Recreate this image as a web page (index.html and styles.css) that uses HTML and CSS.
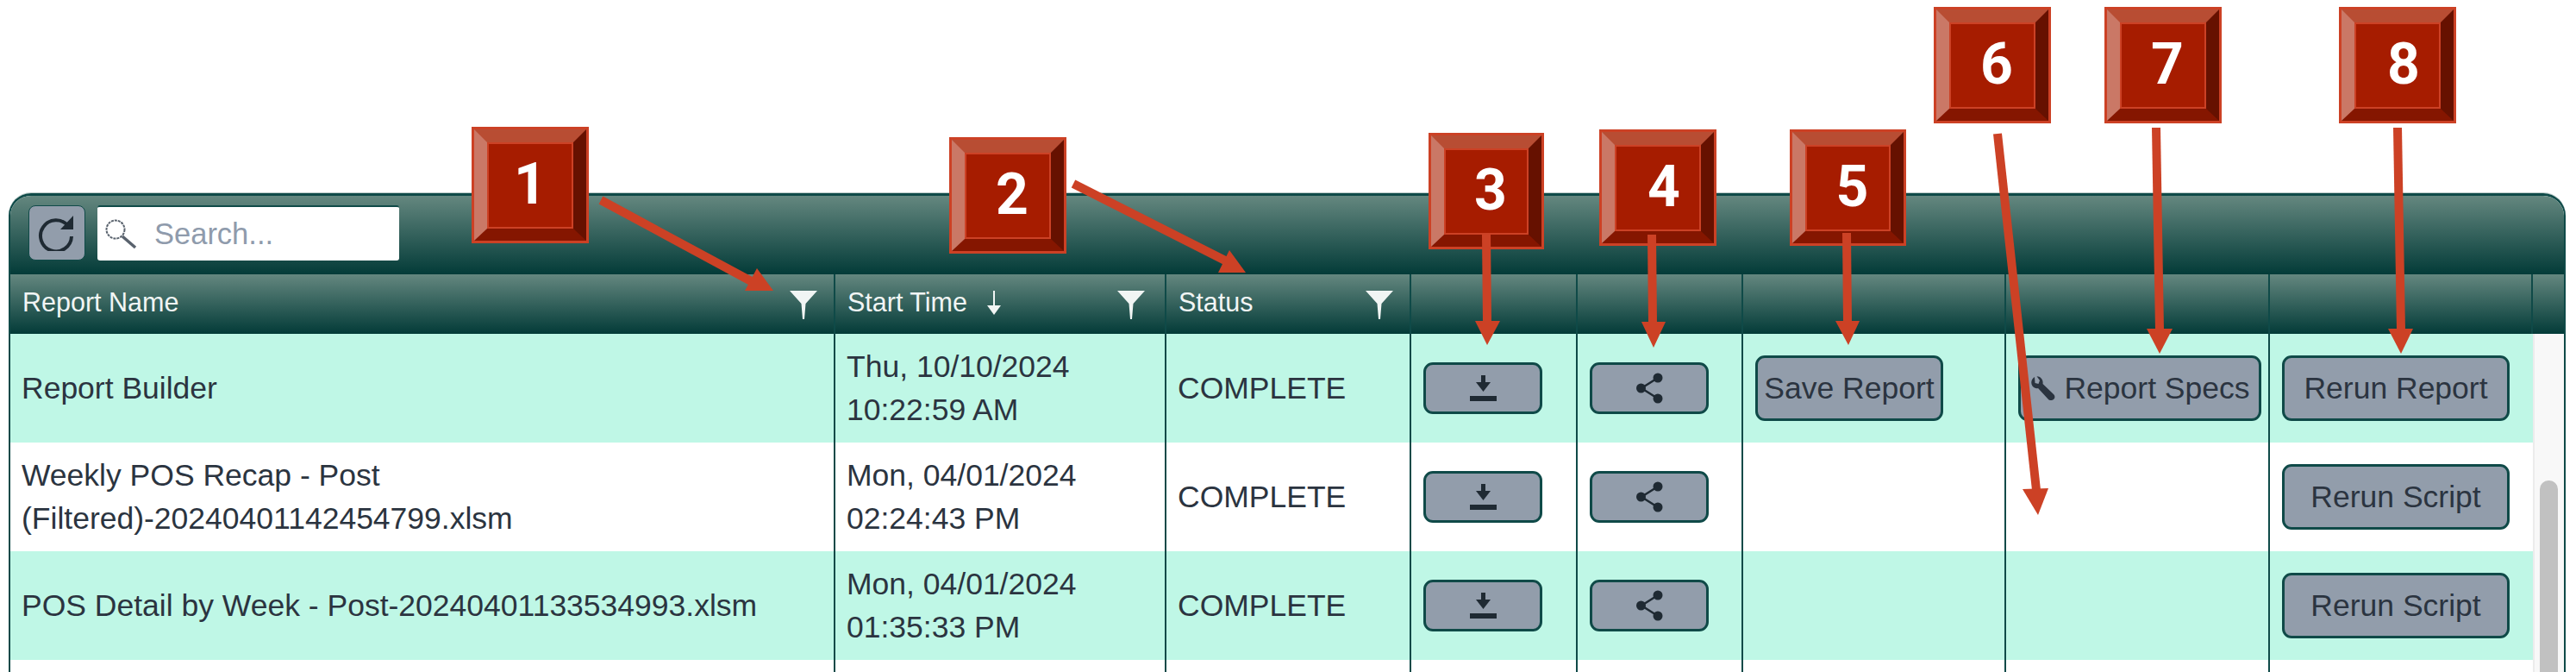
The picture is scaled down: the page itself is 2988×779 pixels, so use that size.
FILE: index.html
```html
<!DOCTYPE html>
<html lang="en">
<head>
    <meta charset="UTF-8">
    <meta name="viewport" content="width=device-width, initial-scale=1.0">
    <title>Report History</title>
    <link rel="stylesheet" href="styles.css">
</head>
<body>
    <svg class="icon-defs" width="0" height="0">
        <symbol id="icon-filter" viewBox="0 0 32 33">
            <polygon points="0,0 32,0 18.5,15 17,33 15,33 13.5,15"/>
        </symbol>
        <symbol id="icon-download" viewBox="0 0 31 30">
            <rect x="13" y="0" width="5" height="9"/>
            <polygon points="7,8 24,8 15.5,19"/>
            <rect x="0" y="24" width="31" height="6"/>
        </symbol>
        <symbol id="icon-share" viewBox="0 0 31 36">
            <path d="M25 6 L6 18 L25 30" fill="none" stroke="currentColor" stroke-width="2.5"/>
            <circle cx="25" cy="6" r="5.5"/>
            <circle cx="5.5" cy="18" r="5.5"/>
            <circle cx="25" cy="30" r="5.5"/>
        </symbol>
    </svg>

    <div class="page">
        <div class="panel">
            <div class="toolbar">
                <button class="refresh-btn" aria-label="Refresh">
                    <svg width="44" height="42" viewBox="0 0 44 42">
                        <path d="M35 13 A18 18 0 1 0 39 25" fill="none" stroke="currentColor" stroke-width="4"/>
                        <polygon points="41,1 41,17 26,17"/>
                    </svg>
                </button>
                <div class="search-box">
                    <svg width="38" height="36" viewBox="0 0 38 36">
                        <circle cx="12" cy="13" r="10.5" fill="none" stroke="#59626d" stroke-width="2" stroke-dasharray="3 1"/>
                        <path d="M20 21 L35 34" fill="none" stroke="#59626d" stroke-width="3.5"/>
                    </svg>
                    <input type="text" class="search-input" placeholder="Search...">
                </div>
            </div>

            <table class="grid grid-head">
                <colgroup>
                    <col class="col-name"><col class="col-time"><col class="col-status"><col class="col-file"><col class="col-share"><col class="col-save"><col class="col-specs"><col class="col-rerun"><col class="col-gutter">
                </colgroup>
                <thead>
                    <tr>
                        <th><div class="th-inner">Report Name <svg class="filter"><use href="#icon-filter"/></svg></div></th>
                        <th class="th-time">
                            <div class="th-inner">
                                Start Time
                                <svg class="sort-arrow" viewBox="0 0 18 28"><rect x="8" y="0" width="2" height="20"/><polygon points="1,17 17,17 9,28"/></svg>
                                <svg class="filter"><use href="#icon-filter"/></svg>
                            </div>
                        </th>
                        <th><div class="th-inner">Status <svg class="filter"><use href="#icon-filter"/></svg></div></th>
                        <th></th>
                        <th></th>
                        <th></th>
                        <th></th>
                        <th></th>
                        <th></th>
                    </tr>
                </thead>
            </table>

            <div class="grid-body">
                <table class="grid grid-rows">
                    <colgroup>
                        <col class="col-name"><col class="col-time"><col class="col-status"><col class="col-file"><col class="col-share"><col class="col-save"><col class="col-specs"><col class="col-rerun">
                    </colgroup>
                    <tbody>
                        <tr class="row-alt">
                            <td>Report Builder</td>
                            <td>Thu, 10/10/2024<br>10:22:59 AM</td>
                            <td>COMPLETE</td>
                            <td><button class="btn btn-icon" aria-label="Download"><svg class="ico-download"><use href="#icon-download"/></svg></button></td>
                            <td><button class="btn btn-icon" aria-label="Share"><svg class="ico-share"><use href="#icon-share"/></svg></button></td>
                            <td><button class="btn btn-save">Save Report</button></td>
                            <td>
                                <button class="btn btn-specs">
                                    <svg class="ico-wrench" viewBox="0 0 30 28">
                                        <path d="M6 1 C2.5 3 1 8 3.5 11.5 C5.5 14 8 14.5 10 14 L22 27 C23.5 28.5 27 28.5 28.5 26.5 C30 25 29.5 22.5 28 21 L15.5 9 C16 6 15 3 12 1 C11 0.5 9.5 0.2 8.5 0.2 L12 5 L10.5 9 L6.5 8 Z"/>
                                    </svg>
                                    Report Specs
                                </button>
                            </td>
                            <td><button class="btn btn-rerun">Rerun Report</button></td>
                        </tr>
                        <tr>
                            <td>Weekly POS Recap - Post<br>(Filtered)-20240401142454799.xlsm</td>
                            <td>Mon, 04/01/2024<br>02:24:43 PM</td>
                            <td>COMPLETE</td>
                            <td><button class="btn btn-icon" aria-label="Download"><svg class="ico-download"><use href="#icon-download"/></svg></button></td>
                            <td><button class="btn btn-icon" aria-label="Share"><svg class="ico-share"><use href="#icon-share"/></svg></button></td>
                            <td></td>
                            <td></td>
                            <td><button class="btn btn-rerun">Rerun Script</button></td>
                        </tr>
                        <tr class="row-alt">
                            <td>POS Detail by Week - Post-20240401133534993.xlsm</td>
                            <td>Mon, 04/01/2024<br>01:35:33 PM</td>
                            <td>COMPLETE</td>
                            <td><button class="btn btn-icon" aria-label="Download"><svg class="ico-download"><use href="#icon-download"/></svg></button></td>
                            <td><button class="btn btn-icon" aria-label="Share"><svg class="ico-share"><use href="#icon-share"/></svg></button></td>
                            <td></td>
                            <td></td>
                            <td><button class="btn btn-rerun">Rerun Script</button></td>
                        </tr>
                        <tr>
                            <td></td><td></td><td></td><td></td><td></td><td></td><td></td><td></td>
                        </tr>
                    </tbody>
                </table>
                <div class="scroll-track"><div class="scroll-thumb"></div></div>
            </div>
        </div>

        <!-- numbered callouts drawn over the screenshot -->
        <div class="badge badge-1"><div class="bevel"><div class="face">1</div></div></div>
        <div class="badge badge-2"><div class="bevel"><div class="face">2</div></div></div>
        <div class="badge badge-3"><div class="bevel"><div class="face">3</div></div></div>
        <div class="badge badge-4"><div class="bevel"><div class="face">4</div></div></div>
        <div class="badge badge-5"><div class="bevel"><div class="face">5</div></div></div>
        <div class="badge badge-6"><div class="bevel"><div class="face">6</div></div></div>
        <div class="badge badge-7"><div class="bevel"><div class="face">7</div></div></div>
        <div class="badge badge-8"><div class="bevel"><div class="face">8</div></div></div>

        <svg class="arrows" width="2988" height="779" viewBox="0 0 2988 779">
            <line x1="697" y1="232" x2="875" y2="328"/>
            <polygon points="878,311 864,337 897,337"/>
            <line x1="1245" y1="213" x2="1429" y2="306"/>
            <polygon points="1426,290 1413,316 1445,316"/>
            <line x1="1724" y1="272" x2="1725" y2="374"/>
            <polygon points="1711,372 1740,372 1725,400"/>
            <line x1="1916" y1="272" x2="1917" y2="375"/>
            <polygon points="1904,373 1932,373 1918,403"/>
            <line x1="2142" y1="270" x2="2143" y2="374"/>
            <polygon points="2129,372 2157,372 2144,400"/>
            <line x1="2317" y1="155" x2="2362" y2="568"/>
            <polygon points="2346,567 2376,566 2364,597"/>
            <line x1="2501" y1="148" x2="2505" y2="383"/>
            <polygon points="2490,381 2520,381 2505,410"/>
            <line x1="2781" y1="148" x2="2785" y2="383"/>
            <polygon points="2770,381 2799,381 2785,410"/>
        </svg>
    </div>
</body>
</html>
```

FILE: styles.css
```css
body {
    margin: 0;
    font-family: "Liberation Sans", Arial, sans-serif;
    color: #2b3440;
    background-color: #ffffff;
    overflow: hidden;
}
.icon-defs {
    position: absolute;
}
.page {
    position: relative;
    box-sizing: border-box;
    height: 779px;
    padding: 224px 12px 0 10px;
    overflow: hidden;
}
.panel {
    box-sizing: border-box;
    height: 100%;
    border: 2px solid #0f4a48;
    border-top-width: 3px;
    border-bottom: none;
    border-radius: 26px 26px 0 0;
    box-shadow: 0 -1px 0 #b9c9c6;
    overflow: hidden;
}
.toolbar {
    display: flex;
    align-items: center;
    gap: 14px;
    height: 91px;
    box-sizing: border-box;
    padding: 0 0 5px 21px;
    background: linear-gradient(#64877f, #033b38);
}
.refresh-btn {
    display: flex;
    align-items: center;
    justify-content: center;
    width: 66px;
    height: 64px;
    padding: 0;
    color: #1f2a33;
    fill: #1f2a33;
    background-color: #929dab;
    border: 1px solid #0f4a48;
    border-radius: 8px;
}
.search-box {
    display: flex;
    align-items: center;
    width: 350px;
    height: 64px;
    box-sizing: border-box;
    padding-left: 9px;
    background-color: #ffffff;
    border-top: 2px solid #0f4a48;
    border-radius: 3px;
}
.search-input {
    flex: 1;
    min-width: 0;
    margin-left: 19px;
    padding: 0;
    border: none;
    outline: none;
    font-family: inherit;
    font-size: 34.5px;
    background: transparent;
}
.search-input::placeholder {
    color: #8f9bac;
    opacity: 1;
}

.grid {
    table-layout: fixed;
    border-collapse: separate;
    border-spacing: 0;
}
.grid-head {
    width: 2962px;
}
.grid-rows {
    width: 2926px;
    flex: none;
    align-self: flex-start;
}
.col-name { width: 957px; }
.col-time { width: 384px; }
.col-status { width: 284px; }
.col-file { width: 193px; }
.col-share { width: 192px; }
.col-save { width: 305px; }
.col-specs { width: 306px; }
.col-rerun { width: 305px; }
.col-gutter { width: 36px; }

.grid-head th {
    height: 69px;
    padding: 0 19px 4px 14px;
    box-sizing: border-box;
    font-size: 30.5px;
    font-weight: normal;
    text-align: left;
    color: #f1f5f4;
    background: linear-gradient(#64877f, #033b38);
    border-right: 2px solid #0f4a48;
}
.grid-head th:last-child {
    border-right: none;
}
.grid-head .th-time {
    padding-right: 23px;
}
.th-inner {
    display: flex;
    align-items: center;
    height: 40px;
}
.filter {
    width: 32px;
    height: 33px;
    margin-left: auto;
    margin-top: 6px;
    fill: #f1f5f4;
}
.sort-arrow {
    width: 18px;
    height: 28px;
    margin-left: 22px;
    fill: #f1f5f4;
}

.grid-body {
    display: flex;
}
.grid-rows td {
    height: 126px;
    padding: 0 13px;
    box-sizing: border-box;
    font-size: 35.5px;
    line-height: 50px;
    white-space: nowrap;
    border-right: 2px solid #0f4a48;
}
.grid-rows td:last-child {
    border-right: none;
}
.row-alt td {
    background-color: #bff7e6;
}
.btn {
    display: flex;
    align-items: center;
    justify-content: center;
    box-sizing: border-box;
    height: 76px;
    margin-left: 1px;
    padding: 0;
    font-family: inherit;
    font-size: 35.5px;
    color: #2b3440;
    background-color: #929dab;
    border: 3px solid #0f4a48;
    border-radius: 11px;
}
.btn-icon {
    width: 138px;
    height: 60px;
}
.btn-save {
    width: 218px;
}
.btn-specs {
    width: 282px;
    gap: 10px;
}
.btn-rerun {
    width: 264px;
}
.ico-download {
    width: 31px;
    height: 30px;
    fill: #1f2a33;
}
.ico-share {
    width: 31px;
    height: 36px;
    color: #1f2a33;
    fill: #1f2a33;
}
.ico-wrench {
    width: 30px;
    height: 28px;
    fill: #2b3440;
}
.scroll-track {
    flex: 1;
    background-color: #f8f8f8;
    border-left: 2px solid #ececec;
    padding: 170px 7px 0 6px;
}
.scroll-thumb {
    height: 400px;
    background-color: #c1c1c1;
    border-radius: 10px 10px 0 0;
}

/* callouts */
.badge {
    position: absolute;
    box-sizing: border-box;
    width: 136px;
    height: 135px;
    border: 3px solid #cc4125;
}
.bevel {
    box-sizing: border-box;
    height: 100%;
    border-style: solid;
    border-width: 15px 15px 14px 15px;
    border-color: #b84d33 #661100 #851600 #ca7866;
}
.face {
    display: flex;
    align-items: center;
    justify-content: center;
    box-sizing: border-box;
    height: 100%;
    padding: 0 0 4px 10px;
    border: 2px solid #cc4125;
    background-color: #a61c00;
    font-family: Roboto, sans-serif;
    font-size: 66px;
    font-weight: 700;
    color: #ffffff;
}
.badge-1 { left: 547px; top: 147px; }
.badge-1 .face { padding-left: 0; }
.badge-2 { left: 1101px; top: 159px; }
.badge-3 { left: 1657px; top: 154px; width: 134px; }
.badge-4 { left: 1855px; top: 150px; }
.badge-4 .face { padding-left: 14px; }
.badge-5 { left: 2076px; top: 150px; width: 135px; }
.badge-6 { left: 2243px; top: 8px; }
.badge-7 { left: 2441px; top: 8px; }
.badge-8 { left: 2713px; top: 8px; }
.badge-8 .face { padding-left: 14px; }

.arrows {
    position: absolute;
    left: 0;
    top: 0;
    fill: #cc4125;
    stroke: none;
    pointer-events: none;
}
.arrows line {
    stroke: #cc4125;
    stroke-width: 10;
}
```
